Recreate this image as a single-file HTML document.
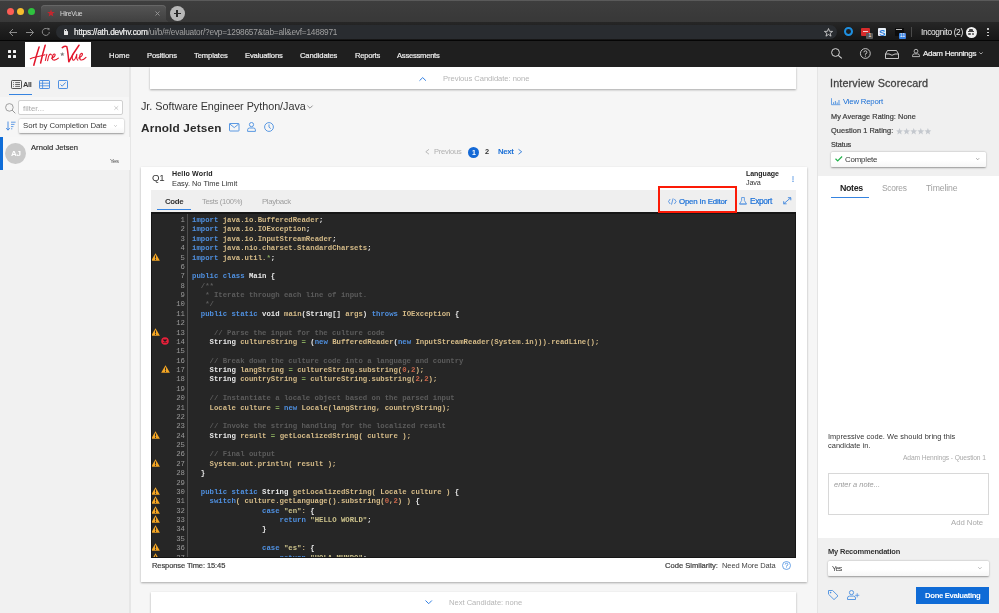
<!DOCTYPE html>
<html><head><meta charset="utf-8">
<style>
*{margin:0;padding:0;box-sizing:border-box}
html,body{width:999px;height:613px;overflow:hidden;background:#f6f6f6;font-family:"Liberation Sans",sans-serif;position:relative}
.a{position:absolute;white-space:nowrap}
.t{line-height:normal;will-change:transform}
.card{background:#fff;box-shadow:0 1px 2px rgba(0,0,0,.32)}
.code{will-change:transform;white-space:pre;font-family:"Liberation Mono",monospace;font-weight:bold;font-size:7.3px;line-height:9.37px;color:#e0e0e0}
.ln{color:#9a9a9a;text-align:right;font-weight:normal}
.k{color:#4f90e0}.i{color:#d5bb88}.c{color:#5c5c5c}.n{color:#c9664a}.s{color:#cdc38c}.w{color:#e8e8e8}.g{color:#86a85c}
.dd{background:linear-gradient(#fff 55%,#f6f6f6);border-radius:1.5px;box-shadow:0 0.6px 1.8px rgba(0,0,0,.38)}
svg.ic{position:absolute;overflow:visible}
</style></head><body>
<!-- ===== CHROME ===== -->
<div class="a" style="left:0;top:0;width:999px;height:22.3px;background:linear-gradient(#3e3e3e,#383838)"></div>
<div class="a" style="left:0;top:0;width:999px;height:1px;background:#5a5a5a"></div>
<div class="a" style="left:6.6px;top:8.3px;width:7px;height:7px;border-radius:50%;background:#fd5d55"></div>
<div class="a" style="left:17.1px;top:8.3px;width:7px;height:7px;border-radius:50%;background:#f6be2f"></div>
<div class="a" style="left:27.6px;top:8.3px;width:7px;height:7px;border-radius:50%;background:#2fc23f"></div>
<div class="a" style="left:41px;top:5px;width:125px;height:17.3px;background:linear-gradient(#555,#404040);border-radius:4px 4px 0 0;box-shadow:inset 0 1px 0 #666"></div><div class="a" style="left:37px;top:18px;width:4px;height:4.3px;background:radial-gradient(circle at 0 0,#383838 3.9px,#404040 4.1px)"></div><div class="a" style="left:166px;top:18px;width:4px;height:4.3px;background:radial-gradient(circle at 100% 0,#383838 3.9px,#404040 4.1px)"></div>
<svg class="ic" style="left:47.3px;top:9.3px" width="8" height="8" viewBox="0 0 10 10"><path d="M5 0.3 L6.2 3.6 L9.8 3.7 L7 5.9 L8 9.4 L5 7.4 L2 9.4 L3 5.9 L0.2 3.7 L3.8 3.6 Z" fill="#c4262e"/></svg>
<svg class="ic" style="left:154.5px;top:10.5px" width="5" height="5" viewBox="0 0 5 5"><path d="M0.5 0.5 L4.5 4.5 M4.5 0.5 L0.5 4.5" stroke="#9a9a9a" stroke-width="0.9"/></svg>
<div class="a" style="left:169.5px;top:6px;width:15px;height:15px;border-radius:50%;background:#b8b8b8"></div>
<div class="a" style="left:173.5px;top:13px;width:7px;height:1.2px;background:#2a2a2a"></div>
<div class="a" style="left:176.4px;top:10px;width:1.2px;height:7px;background:#2a2a2a"></div>
<div class="a" style="left:0;top:22.3px;width:999px;height:17.7px;background:linear-gradient(#262626,#161616)"></div>
<div class="a" style="left:56.2px;top:25.2px;width:780.8px;height:14px;background:#292c30;border-radius:7px"></div>
<svg class="ic" style="left:8px;top:27.5px" width="10" height="9" viewBox="0 0 10 9"><path d="M9 4.5 H1.5 M5 1 L1.5 4.5 L5 8" stroke="#8a8a8a" stroke-width="1" fill="none"/></svg>
<svg class="ic" style="left:24.5px;top:27.5px" width="10" height="9" viewBox="0 0 10 9"><path d="M1 4.5 H8.5 M5 1 L8.5 4.5 L5 8" stroke="#8a8a8a" stroke-width="1" fill="none"/></svg>
<svg class="ic" style="left:40.5px;top:27.3px" width="10" height="10" viewBox="0 0 10 10"><path d="M8.3 5 A3.5 3.5 0 1 1 7 2.2" stroke="#8a8a8a" stroke-width="1" fill="none"/><path d="M6 0.8 L8.6 1.2 L8.2 3.8 Z" fill="#8a8a8a"/></svg>
<div class="a" style="left:63.5px;top:31px;width:4.8px;height:3.8px;background:#e6e6e6;border-radius:0.5px"></div>
<div class="a" style="left:64.4px;top:28.6px;width:3px;height:3.4px;border:0.9px solid #e6e6e6;border-bottom:none;border-radius:1.5px 1.5px 0 0"></div>
<svg class="ic" style="left:823.5px;top:27.5px" width="9" height="9" viewBox="0 0 10 10"><path d="M5 0.6 L6.2 3.7 L9.5 3.8 L6.9 5.8 L7.8 9.1 L5 7.2 L2.2 9.1 L3.1 5.8 L0.5 3.8 L3.8 3.7 Z" stroke="#dcdcdc" stroke-width="0.9" fill="none"/></svg>
<div class="a" style="left:844.4px;top:27.2px;width:8.8px;height:8.8px;border-radius:50%;border:2.1px solid #1e8fe0"></div>
<div class="a" style="left:861.4px;top:27.6px;width:8.4px;height:8px;background:#d62b2b;border-radius:1px"></div><div class="a" style="left:862.6px;top:30.6px;width:5.6px;height:1.3px;background:#f4d0d0"></div>
<div class="a" style="left:866.4px;top:33.4px;width:6.8px;height:5.4px;background:#5a5a5a;border-radius:1px;color:#eee;font-size:5px;line-height:5.4px;text-align:center">1</div>
<div class="a" style="left:877.8px;top:27.5px;width:8.6px;height:8.6px;background:#e9f1fa;border-radius:1px;color:#2b7bd6;font-weight:bold;font-size:9.5px;line-height:9px;text-align:center">S</div>
<div class="a" style="left:895.3px;top:27.5px;width:8.4px;height:8px;background:#0c0c0c"></div><div class="a" style="left:896.3px;top:29.3px;width:5.5px;height:1px;background:#bbb"></div>
<div class="a" style="left:898.6px;top:33.4px;width:7.7px;height:5.4px;background:#3b82e0;border-radius:1px;color:#fff;font-size:5px;line-height:5.4px;text-align:center">11</div>
<div class="a" style="left:910.5px;top:27px;width:1px;height:10px;background:#4a4a4a"></div>
<div class="a" style="left:965.6px;top:27.1px;width:11.3px;height:11.3px;border-radius:50%;background:#f2f2f2"></div>
<div class="a" style="left:968.3px;top:30.6px;width:6px;height:1.2px;background:#444"></div><div class="a" style="left:969.3px;top:29px;width:4px;height:2px;background:#444;border-radius:1px 1px 0 0"></div>
<div class="a" style="left:968.3px;top:33.2px;width:2.6px;height:2px;border-radius:1px;background:#555"></div><div class="a" style="left:971.7px;top:33.2px;width:2.6px;height:2px;border-radius:1px;background:#555"></div>
<div class="a" style="left:987.2px;top:28.3px;width:1.6px;height:1.6px;border-radius:50%;background:#e8e8e8"></div>
<div class="a" style="left:987.2px;top:31.6px;width:1.6px;height:1.6px;border-radius:50%;background:#e8e8e8"></div>
<div class="a" style="left:987.2px;top:34.9px;width:1.6px;height:1.6px;border-radius:50%;background:#e8e8e8"></div>
<div class="a" style="left:0;top:40px;width:999px;height:1px;background:#050505"></div>
<!-- ===== APP HEADER ===== -->
<div class="a" style="left:0;top:41px;width:999px;height:26px;background:#1f1f1f"></div>
<div class="a" style="left:7.6px;top:49.5px;width:3.8px;height:3.8px;background:#f2f2f2;border-radius:0.5px"></div>
<div class="a" style="left:12.5px;top:49.5px;width:3.8px;height:3.8px;background:#f2f2f2;border-radius:0.5px"></div>
<div class="a" style="left:7.6px;top:54.5px;width:3.8px;height:3.8px;background:#f2f2f2;border-radius:0.5px"></div>
<div class="a" style="left:12.5px;top:54.5px;width:3.8px;height:3.8px;background:#f2f2f2;border-radius:0.5px"></div>
<div class="a" style="left:25px;top:41.5px;width:66px;height:26px;background:#fff"></div>
<svg class="ic" style="left:25px;top:41px" width="66" height="26" viewBox="0 0 66 26"><g stroke="#e3162b" fill="none" stroke-linecap="round" stroke-linejoin="round"><path d="M8.8 24.2 Q11.5 14 14.1 6" stroke-width="1.5"/><path d="M15.6 22 Q17.8 12 20.2 4.3" stroke-width="1.5"/><path d="M5.3 17.8 Q7 16.8 12 15.8 Q17 14.8 20 13.8" stroke-width="1.1"/><path d="M20.4 19.5 Q21 16.5 21.8 13.4" stroke-width="1.1"/><path d="M22.6 19.6 Q23.4 14.8 24.6 13.4 Q25.5 12.8 26.4 13.8" stroke-width="1.1"/><path d="M26.5 17.3 Q30.2 16 30.2 13.6 Q29.6 12.2 28 13.9 Q26.4 16.8 27.8 18.8 Q30.5 19.8 33.4 17.2" stroke-width="1.1"/><path d="M37.3 6.6 Q39.8 4.8 41.8 5.6 Q43 11 43.8 20.8 Q48 12.5 54 4.2" stroke-width="1.5"/><path d="M47.6 13.2 Q46.6 18 48.2 19.3 Q50 19.6 51.8 13.4 Q51.2 17.8 52.8 19.2" stroke-width="1.1"/><path d="M53.6 17 Q57.4 15.5 57.5 13 Q56.8 11.5 55.2 13.4 Q53.8 16.8 55.4 18.8 Q58 19.8 61 16.4" stroke-width="1.1"/></g><path d="M37.3 10.9 L37.9 12.4 L39.6 12.5 L38.3 13.5 L38.7 15.1 L37.3 14.2 L35.9 15.1 L36.3 13.5 L35 12.5 L36.7 12.4 Z" fill="#7d7d7d"/></svg>
<svg class="ic" style="left:830.8px;top:48.3px" width="12" height="11" viewBox="0 0 12 11"><circle cx="4.5" cy="4.5" r="3.9" stroke="#d8d8d8" stroke-width="1" fill="none"/><path d="M7.3 7.3 L10.8 10.3" stroke="#d8d8d8" stroke-width="1.1"/></svg>
<svg class="ic" style="left:859.8px;top:47.7px" width="11" height="11" viewBox="0 0 11 11"><circle cx="5.35" cy="5.5" r="4.9" stroke="#d8d8d8" stroke-width="0.9" fill="none"/><path d="M3.9 4.3 A1.5 1.5 0 1 1 5.4 5.8 V6.7" stroke="#d8d8d8" stroke-width="0.9" fill="none"/><circle cx="5.4" cy="8.1" r="0.55" fill="#d8d8d8"/></svg>
<svg class="ic" style="left:884.9px;top:49.5px" width="14" height="9" viewBox="0 0 14 9"><path d="M0.5 4 L2.5 0.5 H11.5 L13.5 4 V8.5 H0.5 Z M0.5 4 H4 Q7 6.5 10 4 H13.5" stroke="#d8d8d8" stroke-width="0.9" fill="none"/></svg>
<svg class="ic" style="left:912.3px;top:49.2px" width="8" height="8" viewBox="0 0 8 8"><circle cx="4" cy="2.2" r="1.9" stroke="#d8d8d8" stroke-width="0.8" fill="none"/><path d="M0.5 7.6 V6.6 Q0.5 4.9 2.5 4.9 H5.5 Q7.5 4.9 7.5 6.6 V7.6 Z" stroke="#d8d8d8" stroke-width="0.8" fill="none"/></svg>
<svg class="ic" style="left:978.6px;top:52px" width="4" height="2.5" viewBox="0 0 4 2.5"><path d="M0.3 0.3 L2 2 L3.7 0.3" stroke="#d8d8d8" stroke-width="0.7" fill="none"/></svg>
<!-- ===== SIDEBAR ===== -->
<div class="a" style="left:0;top:67px;width:129.5px;height:546px;background:#f1f1f1"></div>
<div class="a" style="left:0;top:67px;width:129.5px;height:30px;background:#f2f2f2"></div><div class="a" style="left:0;top:97px;width:129.5px;height:39.8px;background:#f6f6f6"></div>
<div class="a" style="left:129px;top:67px;width:2px;height:546px;background:#e6e6e6"></div>
<svg class="ic" style="left:10.8px;top:80px" width="11" height="9" viewBox="0 0 11 9"><rect x="0.5" y="0.5" width="10" height="8" rx="0.8" stroke="#444" stroke-width="0.9" fill="none"/><path d="M2.2 2.6 H3 M4.2 2.6 H9 M2.2 4.5 H3 M4.2 4.5 H9 M2.2 6.4 H3 M4.2 6.4 H9" stroke="#444" stroke-width="0.8"/></svg>
<svg class="ic" style="left:38.7px;top:80px" width="11" height="9" viewBox="0 0 11 9"><rect x="0.5" y="0.5" width="10" height="8" rx="0.6" stroke="#3e86e0" stroke-width="0.9" fill="none"/><path d="M0.5 3.2 H10.5 M0.5 5.8 H10.5 M3.6 0.5 V8.5" stroke="#3e86e0" stroke-width="0.8"/></svg>
<svg class="ic" style="left:57.8px;top:80px" width="10" height="9" viewBox="0 0 10 9"><rect x="0.5" y="0.5" width="9" height="8" rx="0.6" stroke="#3e86e0" stroke-width="0.9" fill="none"/><path d="M2.5 4.5 L4.2 6.2 L7.6 2.4" stroke="#3e86e0" stroke-width="0.9" fill="none"/></svg>
<div class="a" style="left:8.6px;top:93.6px;width:23.7px;height:1.6px;background:#3583e0"></div>
<svg class="ic" style="left:5.3px;top:103px" width="11" height="11" viewBox="0 0 11 11"><circle cx="4.4" cy="4.4" r="3.8" stroke="#8a8a8a" stroke-width="0.8" fill="none"/><path d="M7.1 7.1 L10.3 10.3" stroke="#8a8a8a" stroke-width="0.9"/></svg>
<div class="a" style="left:18.2px;top:100.3px;width:105.2px;height:15.2px;background:#fff;border:1px solid #d0d0d0;border-radius:2px"></div>
<svg class="ic" style="left:113.7px;top:106.3px" width="4.5" height="4" viewBox="0 0 4.5 4"><path d="M0.3 0.2 L4.2 3.8 M4.2 0.2 L0.3 3.8" stroke="#b0b0b0" stroke-width="0.6"/></svg>
<svg class="ic" style="left:6px;top:121px" width="10" height="10" viewBox="0 0 10 10"><path d="M2 0.5 V9 M0.2 7 L2 9.2 L3.8 7" stroke="#3e86e0" stroke-width="0.9" fill="none"/><path d="M5 1.2 H9.6 M5 3.4 H8.5 M5 5.6 H7.4 M5 7.8 H6.3" stroke="#3e86e0" stroke-width="0.8"/></svg>
<div class="a dd" style="left:19px;top:118.5px;width:105.1px;height:14.6px"></div>
<svg class="ic" style="left:114.2px;top:124.6px" width="3" height="2" viewBox="0 0 3 2"><path d="M0.2 0.2 L1.5 1.6 L2.8 0.2" stroke="#999" stroke-width="0.5" fill="none"/></svg>
<div class="a" style="left:0;top:136.8px;width:129.5px;height:33.4px;background:#f7f7f7"></div>
<div class="a" style="left:0;top:136.8px;width:3.3px;height:33.4px;background:#0f6dd8"></div>
<div class="a" style="left:5.2px;top:143.2px;width:20.8px;height:20.8px;border-radius:50%;background:#c9c9c9"></div>
<!-- ===== MAIN ===== -->
<div class="a card" style="left:150px;top:67px;width:646.4px;height:21.6px;clip-path:inset(0 -4px -4px -4px)"></div>
<svg class="ic" style="left:418.5px;top:76.5px" width="7.4" height="4.2" viewBox="0 0 7.4 4.2"><path d="M0.5 3.7 L3.7 0.6 L6.9 3.7" stroke="#2f7de1" stroke-width="1" fill="none"/></svg>
<svg class="ic" style="left:306.5px;top:104.5px" width="6" height="4" viewBox="0 0 6 4"><path d="M0.4 0.6 L3 3.2 L5.6 0.6" stroke="#666" stroke-width="0.7" fill="none"/></svg>
<svg class="ic" style="left:229px;top:122.6px" width="10.5" height="8.5" viewBox="0 0 10.5 8.5"><rect x="0.5" y="0.5" width="9.5" height="7.5" rx="0.5" stroke="#4a8ee0" stroke-width="0.9" fill="none"/><path d="M0.7 0.9 L5.25 4.6 L9.8 0.9" stroke="#4a8ee0" stroke-width="0.9" fill="none"/></svg>
<svg class="ic" style="left:247px;top:121.9px" width="9" height="10" viewBox="0 0 9 10"><circle cx="4.5" cy="2.6" r="2.1" stroke="#4a8ee0" stroke-width="0.9" fill="none"/><path d="M0.6 9.4 V7.8 Q0.6 6 2.6 6 H6.4 Q8.4 6 8.4 7.8 V9.4 Z" stroke="#4a8ee0" stroke-width="0.9" fill="none"/></svg>
<svg class="ic" style="left:263.8px;top:122.1px" width="10" height="10" viewBox="0 0 10 10"><circle cx="5" cy="5" r="4.4" stroke="#4a8ee0" stroke-width="0.9" fill="none"/><path d="M5 2.4 V5.2 L6.8 6.6" stroke="#4a8ee0" stroke-width="0.9" fill="none"/></svg>
<svg class="ic" style="left:425px;top:149.4px" width="4.5" height="5.5" viewBox="0 0 4.5 5.5"><path d="M4 0.3 L0.8 2.75 L4 5.2" stroke="#aaa" stroke-width="0.8" fill="none"/></svg>
<div class="a" style="left:467.9px;top:146.9px;width:11.2px;height:11.2px;border-radius:50%;background:#1469d6"></div>
<svg class="ic" style="left:518px;top:149.4px" width="4.5" height="5.5" viewBox="0 0 4.5 5.5"><path d="M0.5 0.3 L3.7 2.75 L0.5 5.2" stroke="#1a6fd6" stroke-width="0.8" fill="none"/></svg>

<div class="a card" style="left:140.8px;top:166.9px;width:666.2px;height:415.1px"></div>
<svg class="ic" style="left:792.3px;top:175.8px" width="2" height="6.2" viewBox="0 0 2 6.2"><circle cx="1" cy="0.9" r="0.75" fill="#4a8ee0"/><circle cx="1" cy="3.1" r="0.75" fill="#4a8ee0"/><circle cx="1" cy="5.3" r="0.75" fill="#4a8ee0"/></svg>
<div class="a" style="left:150.9px;top:190.3px;width:645.1px;height:22px;background:#efefef"></div>
<div class="a" style="left:156.8px;top:208.8px;width:33.9px;height:1.6px;background:#3583e0"></div>
<svg class="ic" style="left:668.1px;top:197.5px" width="8.6" height="7" viewBox="0 0 8.6 7"><path d="M2.2 1 L0.5 3.5 L2.2 6 M6.4 1 L8.1 3.5 L6.4 6 M5.1 0.4 L3.5 6.6" stroke="#3c84de" stroke-width="0.8" fill="none"/></svg>
<svg class="ic" style="left:739.1px;top:197px" width="8" height="7.5" viewBox="0 0 8 7.5"><path d="M2.6 0.5 H5.4 V3.5 L7.5 7 H0.5 L2.6 3.5 Z M0.5 7 H7.5" stroke="#4a8ee0" stroke-width="0.8" fill="none"/></svg>
<svg class="ic" style="left:782.5px;top:197.3px" width="8.5" height="7.5" viewBox="0 0 8.5 7.5"><path d="M0.7 6.8 L7.8 0.7 M0.7 4.2 V6.8 H3.6 M7.8 3.3 V0.7 H4.9" stroke="#3c84de" stroke-width="0.9" fill="none"/></svg>
<div class="a" style="left:150.9px;top:212.3px;width:645.1px;height:345.5px;background:#161616"></div>
<div class="a" style="left:151.9px;top:213.5px;width:643.1px;height:343.3px;background:#262626;overflow:hidden">
<div class="a" style="left:35.3px;top:0;width:1px;height:346px;background:#4e4e4e"></div>
<div class="a" style="left:-1px;top:-1.2px;width:645px;height:346px">
<pre class="a code" style="left:41.1px;top:3.4px"><span class="k">import</span> <span class="i">java.io.BufferedReader</span><span class="w">;</span>
<span class="k">import</span> <span class="i">java.io.IOException</span><span class="w">;</span>
<span class="k">import</span> <span class="i">java.io.InputStreamReader</span><span class="w">;</span>
<span class="k">import</span> <span class="i">java.nio.charset.StandardCharsets</span><span class="w">;</span>
<span class="k">import</span> <span class="i">java.util.</span><span class="g">*</span><span class="w">;</span>

<span class="k">public</span> <span class="k">class</span> <span class="w">Main {</span>
<span class="c">  /**</span>
<span class="c">   * Iterate through each line of input.</span>
<span class="c">   */</span>
  <span class="k">public</span> <span class="k">static</span> <span class="w">void</span> <span class="i">main</span><span class="w">(String[]</span> <span class="i">args</span><span class="w">)</span> <span class="k">throws</span> <span class="i">IOException</span> <span class="w">{</span>

<span class="c">     // Parse the input for the culture code</span>
    <span class="w">String</span> <span class="i">cultureString</span> <span class="g">=</span> <span class="w">(</span><span class="k">new</span> <span class="i">BufferedReader</span><span class="w">(</span><span class="k">new</span> <span class="i">InputStreamReader(System.in))).readLine();</span>

<span class="c">    // Break down the culture code into a language and country</span>
    <span class="w">String</span> <span class="i">langString</span> <span class="g">=</span> <span class="i">cultureString.substring(</span><span class="n">0</span><span class="i">,</span><span class="n">2</span><span class="i">);</span>
    <span class="w">String</span> <span class="i">countryString</span> <span class="g">=</span> <span class="i">cultureString.substring(</span><span class="n">2</span><span class="i">,</span><span class="n">2</span><span class="i">);</span>

<span class="c">    // Instantiate a locale object based on the parsed input</span>
    <span class="i">Locale culture</span> <span class="g">=</span> <span class="k">new</span> <span class="i">Locale(langString, countryString);</span>

<span class="c">    // Invoke the string handling for the localized result</span>
    <span class="w">String</span> <span class="i">result</span> <span class="g">=</span> <span class="i">getLocalizedString( culture );</span>

<span class="c">    // Final output</span>
    <span class="i">System.out.println( result );</span>
  <span class="w">}</span>

  <span class="k">public</span> <span class="k">static</span> <span class="w">String</span> <span class="i">getLocalizedString( Locale culture )</span> <span class="w">{</span>
    <span class="k">switch</span><span class="i">( culture.getLanguage().substring(</span><span class="n">0</span><span class="i">,</span><span class="n">2</span><span class="i">) )</span> <span class="w">{</span>
                <span class="k">case</span> <span class="s">&quot;en&quot;</span><span class="i">:</span> <span class="w">{</span>
                    <span class="k">return</span> <span class="s">&quot;HELLO WORLD&quot;</span><span class="w">;</span>
                <span class="w">}</span>

                <span class="k">case</span> <span class="s">&quot;es&quot;</span><span class="i">:</span> <span class="w">{</span>
                    <span class="k">return</span> <span class="s">&quot;HOLA MUNDO&quot;</span><span class="w">;</span></pre>
<pre class="a code ln" style="left:0;top:3.4px;width:34px">1
2
3
4
5
6
7
8
9
10
11
12
13
14
15
16
17
18
19
20
21
22
23
24
25
26
27
28
29
30
31
32
33
34
35
36
37</pre>
<svg class="a" style="left:0.50px;top:40.48px" width="9" height="8" viewBox="0 0 9 8"><path d="M4.5 0.2 L8.9 7.8 L0.1 7.8 Z" fill="#f5a623"/><rect x="4.05" y="2.5" width="0.95" height="3" fill="#262626"/><rect x="4.05" y="6.1" width="0.95" height="0.95" fill="#262626"/></svg><svg class="a" style="left:0.50px;top:115.44px" width="9" height="8" viewBox="0 0 9 8"><path d="M4.5 0.2 L8.9 7.8 L0.1 7.8 Z" fill="#f5a623"/><rect x="4.05" y="2.5" width="0.95" height="3" fill="#262626"/><rect x="4.05" y="6.1" width="0.95" height="0.95" fill="#262626"/></svg><svg class="a" style="left:0.50px;top:218.51px" width="9" height="8" viewBox="0 0 9 8"><path d="M4.5 0.2 L8.9 7.8 L0.1 7.8 Z" fill="#f5a623"/><rect x="4.05" y="2.5" width="0.95" height="3" fill="#262626"/><rect x="4.05" y="6.1" width="0.95" height="0.95" fill="#262626"/></svg><svg class="a" style="left:0.50px;top:246.62px" width="9" height="8" viewBox="0 0 9 8"><path d="M4.5 0.2 L8.9 7.8 L0.1 7.8 Z" fill="#f5a623"/><rect x="4.05" y="2.5" width="0.95" height="3" fill="#262626"/><rect x="4.05" y="6.1" width="0.95" height="0.95" fill="#262626"/></svg><svg class="a" style="left:0.50px;top:274.73px" width="9" height="8" viewBox="0 0 9 8"><path d="M4.5 0.2 L8.9 7.8 L0.1 7.8 Z" fill="#f5a623"/><rect x="4.05" y="2.5" width="0.95" height="3" fill="#262626"/><rect x="4.05" y="6.1" width="0.95" height="0.95" fill="#262626"/></svg><svg class="a" style="left:0.50px;top:284.10px" width="9" height="8" viewBox="0 0 9 8"><path d="M4.5 0.2 L8.9 7.8 L0.1 7.8 Z" fill="#f5a623"/><rect x="4.05" y="2.5" width="0.95" height="3" fill="#262626"/><rect x="4.05" y="6.1" width="0.95" height="0.95" fill="#262626"/></svg><svg class="a" style="left:0.50px;top:293.47px" width="9" height="8" viewBox="0 0 9 8"><path d="M4.5 0.2 L8.9 7.8 L0.1 7.8 Z" fill="#f5a623"/><rect x="4.05" y="2.5" width="0.95" height="3" fill="#262626"/><rect x="4.05" y="6.1" width="0.95" height="0.95" fill="#262626"/></svg><svg class="a" style="left:0.50px;top:302.84px" width="9" height="8" viewBox="0 0 9 8"><path d="M4.5 0.2 L8.9 7.8 L0.1 7.8 Z" fill="#f5a623"/><rect x="4.05" y="2.5" width="0.95" height="3" fill="#262626"/><rect x="4.05" y="6.1" width="0.95" height="0.95" fill="#262626"/></svg><svg class="a" style="left:0.50px;top:312.21px" width="9" height="8" viewBox="0 0 9 8"><path d="M4.5 0.2 L8.9 7.8 L0.1 7.8 Z" fill="#f5a623"/><rect x="4.05" y="2.5" width="0.95" height="3" fill="#262626"/><rect x="4.05" y="6.1" width="0.95" height="0.95" fill="#262626"/></svg><svg class="a" style="left:0.50px;top:330.95px" width="9" height="8" viewBox="0 0 9 8"><path d="M4.5 0.2 L8.9 7.8 L0.1 7.8 Z" fill="#f5a623"/><rect x="4.05" y="2.5" width="0.95" height="3" fill="#262626"/><rect x="4.05" y="6.1" width="0.95" height="0.95" fill="#262626"/></svg><svg class="a" style="left:0.50px;top:340.32px" width="9" height="8" viewBox="0 0 9 8"><path d="M4.5 0.2 L8.9 7.8 L0.1 7.8 Z" fill="#f5a623"/><rect x="4.05" y="2.5" width="0.95" height="3" fill="#262626"/><rect x="4.05" y="6.1" width="0.95" height="0.95" fill="#262626"/></svg><svg class="a" style="left:10.10px;top:152.92px" width="9" height="8" viewBox="0 0 9 8"><path d="M4.5 0.2 L8.9 7.8 L0.1 7.8 Z" fill="#f5a623"/><rect x="4.05" y="2.5" width="0.95" height="3" fill="#262626"/><rect x="4.05" y="6.1" width="0.95" height="0.95" fill="#262626"/></svg><svg class="a" style="left:10.3px;top:125.11px" width="8" height="8" viewBox="0 0 8 8"><circle cx="4" cy="4" r="3.8" fill="#e8203a"/><path d="M2.5 2.5 L5.5 5.5 M5.5 2.5 L2.5 5.5" stroke="#1a1a1a" stroke-width="1.4"/></svg>
</div>
</div>
<svg class="ic" style="left:781.8px;top:561.1px" width="9" height="9" viewBox="0 0 9 9"><circle cx="4.5" cy="4.5" r="4" stroke="#4a8ee0" stroke-width="0.8" fill="none"/><path d="M3.2 3.5 A1.3 1.3 0 1 1 4.5 4.8 V5.6" stroke="#4a8ee0" stroke-width="0.8" fill="none"/><circle cx="4.5" cy="6.8" r="0.45" fill="#4a8ee0"/></svg>

<div class="a card" style="left:151px;top:591.8px;width:645.4px;height:40px"></div>
<svg class="ic" style="left:424.8px;top:600.2px" width="7.4" height="4.4" viewBox="0 0 7.4 4.4"><path d="M0.5 0.5 L3.7 3.7 L6.9 0.5" stroke="#2f7de1" stroke-width="1" fill="none"/></svg>
<!-- ===== RIGHT PANEL ===== -->
<div class="a" style="left:817px;top:67px;width:1.2px;height:546px;background:#e4e4e4"></div>
<div class="a" style="left:818.3px;top:67px;width:181px;height:546px;background:#fff"></div>
<div class="a" style="left:818.3px;top:67px;width:181px;height:109.3px;background:#f0f0f0"></div>
<svg class="ic" style="left:831px;top:97.5px" width="9.5" height="7.2" viewBox="0 0 9.5 7.2"><path d="M0.5 0.2 V6.7 H9.3" stroke="#4a8ee0" stroke-width="0.8" fill="none"/><path d="M2.6 6.2 V4.2 M4.4 6.2 V3 M6.2 6.2 V4.4 M8 6.2 V2" stroke="#4a8ee0" stroke-width="0.9"/></svg>
<svg class="ic" style="left:896.4px;top:127.6px" width="36" height="6.5" viewBox="0 0 36 6.5"><g fill="#c4c8ce"><path id="st" d="M3.5 0 L4.4 2.2 L6.9 2.4 L5 4 L5.6 6.4 L3.5 5.1 L1.4 6.4 L2 4 L0.1 2.4 L2.6 2.2 Z"/><use href="#st" x="7.1"/><use href="#st" x="14.2"/><use href="#st" x="21.3"/><use href="#st" x="28.4"/></g></svg>
<div class="a dd" style="left:830.7px;top:151.6px;width:155.1px;height:15.3px"></div>
<svg class="ic" style="left:834.9px;top:156.3px" width="7.5" height="5.5" viewBox="0 0 7.5 5.5"><path d="M0.5 2.8 L2.7 4.9 L7.1 0.5" stroke="#21b14a" stroke-width="1.2" fill="none"/></svg>
<svg class="ic" style="left:975.8px;top:158.2px" width="3.4" height="2.2" viewBox="0 0 3.4 2.2"><path d="M0.2 0.2 L1.7 1.8 L3.2 0.2" stroke="#777" stroke-width="0.6" fill="none"/></svg>
<div class="a" style="left:831.1px;top:196.5px;width:38.4px;height:1.5px;background:#3583e0"></div>
<div class="a" style="left:828.3px;top:472.5px;width:160.3px;height:42.8px;background:#fff;border:1px solid #d8d8d8"></div>
<div class="a" style="left:818.3px;top:538px;width:181px;height:75px;background:#f0f0f0"></div>
<div class="a dd" style="left:828.3px;top:560.9px;width:160.3px;height:14.8px"></div>
<svg class="ic" style="left:977.9px;top:567px" width="3.8" height="2.2" viewBox="0 0 3.8 2.2"><path d="M0.2 0.2 L1.9 1.9 L3.6 0.2" stroke="#888" stroke-width="0.55" fill="none"/></svg>
<svg class="ic" style="left:828px;top:590.1px" width="10.5" height="10" viewBox="0 0 10.5 10"><path d="M0.5 0.5 H4.6 L10 5.9 L6 9.6 L0.5 4.2 Z" stroke="#4a8ee0" stroke-width="0.9" fill="none" stroke-linejoin="round"/><circle cx="2.6" cy="2.6" r="0.8" fill="#4a8ee0"/></svg>
<svg class="ic" style="left:846.5px;top:590.1px" width="12.5" height="10" viewBox="0 0 12.5 10"><circle cx="4.5" cy="2.6" r="2.1" stroke="#4a8ee0" stroke-width="0.9" fill="none"/><path d="M0.5 9.5 V8 Q0.5 6.1 2.6 6.1 H6.4 Q8.5 6.1 8.5 8 V9.5 Z" stroke="#4a8ee0" stroke-width="0.9" fill="none"/><path d="M10.2 3.2 V7.4 M8.1 5.3 H12.3" stroke="#4a8ee0" stroke-width="0.75"/></svg>
<div class="a" style="left:915.9px;top:586.8px;width:72.7px;height:17px;background:#0f6bd6"></div>
<div class="a t" id="tabt" style="left:59.70px;top:9.90px;font-size:6.8px;letter-spacing:-0.304px;color:#d8d8d8;">HireVue</div>
<div class="a t" id="url" style="left:74.20px;top:26.80px;font-size:8.3px;letter-spacing:-0.218px;-webkit-text-stroke:0.23px;color:#f0f0f0;">https://ath.devhv.com<span style='color:#a0a0a0;-webkit-text-stroke:0'>/ui/b/#/evaluator/?evp=1298657&amp;tab=all&amp;evf=1488971</span></div>
<div class="a t" id="incog" style="left:921.00px;top:26.80px;font-size:8.35px;letter-spacing:-0.350px;color:#eeeeee;">Incognito (2)</div>
<div class="a t" id="n1" style="left:109.20px;top:50.70px;font-size:7.6px;letter-spacing:0.189px;-webkit-text-stroke:0.21px;color:#eeeeee;">Home</div>
<div class="a t" id="n2" style="left:146.80px;top:50.70px;font-size:7.6px;letter-spacing:-0.102px;-webkit-text-stroke:0.21px;color:#eeeeee;">Positions</div>
<div class="a t" id="n3" style="left:194.00px;top:50.70px;font-size:7.6px;letter-spacing:-0.101px;-webkit-text-stroke:0.21px;color:#eeeeee;">Templates</div>
<div class="a t" id="n4" style="left:245.00px;top:50.70px;font-size:7.6px;letter-spacing:-0.146px;-webkit-text-stroke:0.21px;color:#eeeeee;">Evaluations</div>
<div class="a t" id="n5" style="left:300.00px;top:50.70px;font-size:7.6px;letter-spacing:-0.113px;-webkit-text-stroke:0.21px;color:#eeeeee;">Candidates</div>
<div class="a t" id="n6" style="left:354.60px;top:50.70px;font-size:7.6px;letter-spacing:-0.232px;-webkit-text-stroke:0.21px;color:#eeeeee;">Reports</div>
<div class="a t" id="n7" style="left:397.00px;top:50.70px;font-size:7.6px;letter-spacing:-0.236px;-webkit-text-stroke:0.21px;color:#eeeeee;">Assessments</div>
<div class="a t" id="user" style="left:922.50px;top:49.00px;font-size:8px;letter-spacing:-0.293px;-webkit-text-stroke:0.22px;color:#eeeeee;">Adam Hennings</div>
<div class="a t" id="all" style="left:23.40px;top:79.70px;font-size:7.48px;letter-spacing:-0.350px;font-weight:bold;color:#3a3a3a;">All</div>
<div class="a t" id="filter" style="left:23.10px;top:104.20px;font-size:7.8px;letter-spacing:0.034px;color:#aaaaaa;">filter...</div>
<div class="a t" id="sort" style="left:23.10px;top:121.10px;font-size:7.8px;letter-spacing:-0.055px;color:#3a3a3a;">Sort by Completion Date</div>
<div class="a t" id="cname" style="left:31.30px;top:143.00px;font-size:7.6px;letter-spacing:0.049px;-webkit-text-stroke:0.21px;color:#333333;">Arnold Jetsen</div>
<div class="a t" id="yes" style="left:110.00px;top:157.70px;font-size:6px;letter-spacing:-0.344px;color:#505050;">Yes</div>
<div class="a t" id="aj" style="left:11.00px;top:149.20px;font-size:8.01px;letter-spacing:-0.350px;font-weight:bold;color:#ffffff;">AJ</div>
<div class="a t" id="prevc" style="left:442.60px;top:74.00px;font-size:7.6px;letter-spacing:-0.042px;color:#b5b5b5;">Previous Candidate: none</div>
<div class="a t" id="nextc" style="left:449.00px;top:598.00px;font-size:7.6px;letter-spacing:-0.018px;color:#b5b5b5;">Next Candidate: none</div>
<div class="a t" id="job" style="left:141.20px;top:100.00px;font-size:10.8px;letter-spacing:-0.026px;color:#333333;">Jr. Software Engineer Python/Java</div>
<div class="a t" id="aname" style="left:141.00px;top:120.50px;font-size:11.8px;letter-spacing:0.145px;font-weight:bold;color:#2a2a2a;">Arnold Jetsen</div>
<div class="a t" id="prev" style="left:434.10px;top:147.30px;font-size:7.5px;letter-spacing:-0.204px;color:#b0b0b0;">Previous</div>
<div class="a t" id="p1" style="left:471.80px;top:149.30px;font-size:7px;letter-spacing:0.000px;font-weight:bold;color:#ffffff;">1</div>
<div class="a t" id="p2" style="left:484.80px;top:147.30px;font-size:7.4px;letter-spacing:0.000px;font-weight:bold;color:#333333;">2</div>
<div class="a t" id="next" style="left:498.00px;top:147.30px;font-size:7.82px;letter-spacing:-0.350px;font-weight:bold;color:#1a6fd6;">Next</div>
<div class="a t" id="q1" style="left:151.50px;top:171.80px;font-size:9.66px;letter-spacing:-0.350px;color:#333333;">Q1</div>
<div class="a t" id="hw" style="left:171.50px;top:169.80px;font-size:7.1px;letter-spacing:0.135px;font-weight:bold;color:#222222;">Hello World</div>
<div class="a t" id="easy" style="left:171.50px;top:178.50px;font-size:7.4px;letter-spacing:0.003px;color:#333333;">Easy. No Time Limit</div>
<div class="a t" id="lang" style="left:746.30px;top:169.80px;font-size:7px;letter-spacing:-0.024px;font-weight:bold;color:#222222;">Language</div>
<div class="a t" id="java" style="left:746.30px;top:178.10px;font-size:7.2px;letter-spacing:-0.162px;color:#333333;">Java</div>
<div class="a t" id="tcode" style="left:164.80px;top:197.00px;font-size:7.83px;letter-spacing:-0.350px;font-weight:bold;color:#333333;">Code</div>
<div class="a t" id="ttests" style="left:202.30px;top:197.00px;font-size:7.63px;letter-spacing:-0.350px;color:#9e9e9e;">Tests (100%)</div>
<div class="a t" id="tplay" style="left:261.90px;top:197.00px;font-size:7.8px;letter-spacing:-0.348px;color:#9e9e9e;">Playback</div>
<div class="a t" id="oie" style="left:679.30px;top:196.90px;font-size:7.9px;letter-spacing:-0.204px;-webkit-text-stroke:0.22px;color:#1e72d8;">Open In Editor</div>
<div class="a t" id="exp" style="left:749.60px;top:195.90px;font-size:8.34px;letter-spacing:-0.350px;-webkit-text-stroke:0.23px;color:#1e72d8;">Export</div>
<div class="a t" id="rt" style="left:151.50px;top:561.00px;font-size:7.5px;letter-spacing:-0.090px;-webkit-text-stroke:0.21px;color:#3d3d3d;">Response Time: 15:45</div>
<div class="a t" id="cs" style="left:665.30px;top:561.30px;font-size:7.6px;letter-spacing:-0.017px;-webkit-text-stroke:0.21px;color:#3d3d3d;">Code Similarity:</div>
<div class="a t" id="nmd" style="left:721.60px;top:561.30px;font-size:7.5px;letter-spacing:-0.097px;color:#444444;">Need More Data</div>
<div class="a t" id="isc" style="left:830.10px;top:76.90px;font-size:10.8px;letter-spacing:0.150px;-webkit-text-stroke:0.30px;color:#444444;">Interview Scorecard</div>
<div class="a t" id="vr" style="left:843.20px;top:97.00px;font-size:7.8px;letter-spacing:-0.226px;color:#1a6fd6;">View Report</div>
<div class="a t" id="avg" style="left:831.10px;top:111.80px;font-size:7.3px;letter-spacing:0.079px;-webkit-text-stroke:0.20px;color:#3a3a3a;">My Average Rating: None</div>
<div class="a t" id="q1r" style="left:831.10px;top:126.00px;font-size:7.4px;letter-spacing:0.061px;-webkit-text-stroke:0.21px;color:#3a3a3a;">Question 1 Rating:</div>
<div class="a t" id="status" style="left:831.10px;top:139.80px;font-size:7.3px;letter-spacing:-0.088px;-webkit-text-stroke:0.20px;color:#3a3a3a;">Status</div>
<div class="a t" id="compl" style="left:844.80px;top:154.60px;font-size:7.9px;letter-spacing:-0.183px;color:#333333;">Complete</div>
<div class="a t" id="notes" style="left:839.50px;top:183.30px;font-size:8.87px;letter-spacing:-0.350px;font-weight:bold;color:#222222;">Notes</div>
<div class="a t" id="scores" style="left:881.50px;top:183.30px;font-size:8.4px;letter-spacing:-0.216px;color:#a0a0a0;">Scores</div>
<div class="a t" id="tl" style="left:926.40px;top:183.30px;font-size:8.7px;letter-spacing:-0.125px;color:#a0a0a0;">Timeline</div>
<div class="a t" id="imp" style="left:828.00px;top:432.20px;font-size:7.4px;letter-spacing:0.071px;color:#333333;">Impressive code. We should bring this</div>
<div class="a t" id="cand2" style="left:828.00px;top:441.20px;font-size:7.4px;letter-spacing:0.053px;color:#333333;">candidate in.</div>
<div class="a t" id="adam" style="left:903.00px;top:453.50px;font-size:6.7px;letter-spacing:-0.118px;color:#aaaaaa;">Adam Hennings - Question 1</div>
<div class="a t" id="enter" style="left:833.60px;top:479.90px;font-size:7.4px;letter-spacing:0.025px;font-style:italic;color:#9a9a9a;">enter a note...</div>
<div class="a t" id="addn" style="left:951.40px;top:518.40px;font-size:7.8px;letter-spacing:-0.053px;color:#aaaaaa;">Add Note</div>
<div class="a t" id="myrec" style="left:828.30px;top:546.70px;font-size:7.5px;letter-spacing:-0.197px;font-weight:bold;color:#333333;">My Recommendation</div>
<div class="a t" id="ryes" style="left:832.40px;top:564.80px;font-size:7px;letter-spacing:-0.560px;color:#333333;">Yes</div>
<div class="a t" id="done" style="left:925.00px;top:591.40px;font-size:7.75px;letter-spacing:-0.350px;font-weight:bold;color:#ffffff;">Done Evaluating</div>
<div class="a" style="left:657.8px;top:185.7px;width:79.6px;height:27.3px;border:2.5px solid #fb1a06"></div>

</body></html>
